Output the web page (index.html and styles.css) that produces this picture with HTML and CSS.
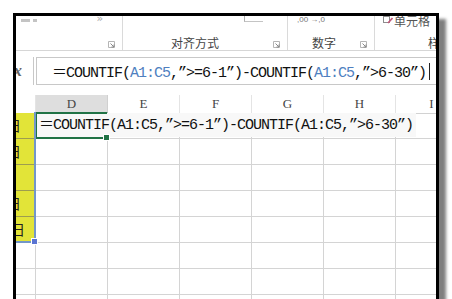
FILE: index.html
```html
<!DOCTYPE html>
<html lang="zh">
<head>
<meta charset="utf-8">
<title>COUNTIF</title>
<link rel="stylesheet" href="styles.css">
</head>
<body>
<div class="page">
  <div class="window">
    <div class="ribbon">
      <div class="group g1">
        <div class="tools">
          <span class="tick t1"></span><span class="tick t2"></span>
          <span class="glyph gl1">ˇ</span><span class="glyph gl2">»</span>
        </div>
        <div class="label-row"><span class="label"></span><svg class="launcher" viewBox="0 0 8 8"><path d="M0.5 0.5H6.5V6.5H0.5Z" fill="none" stroke="#b5b5b5"/><path d="M2.5 2.5L6 6M6 3.5V6H3.5" fill="none" stroke="#8a8a8a"/></svg></div>
      </div>
      <div class="group g2">
        <div class="tools"><span class="wrap-icon"></span></div>
        <div class="label-row"><span class="label">对齐方式</span><svg class="launcher" viewBox="0 0 8 8"><path d="M0.5 0.5H6.5V6.5H0.5Z" fill="none" stroke="#b5b5b5"/><path d="M2.5 2.5L6 6M6 3.5V6H3.5" fill="none" stroke="#8a8a8a"/></svg></div>
      </div>
      <div class="group g3">
        <div class="tools"><span class="numfmt">,00 →,0</span></div>
        <div class="label-row"><span class="label">数字</span><svg class="launcher" viewBox="0 0 8 8"><path d="M0.5 0.5H6.5V6.5H0.5Z" fill="none" stroke="#b5b5b5"/><path d="M2.5 2.5L6 6M6 3.5V6H3.5" fill="none" stroke="#8a8a8a"/></svg></div>
      </div>
      <div class="group g4">
        <div class="tools">
          <svg class="cell-icon" viewBox="0 0 10 10"><rect x="0.5" y="1.5" width="6" height="6" fill="none" stroke="#8d8d8d"/><path d="M5 8L9.5 3" stroke="#c0587a" stroke-width="1.6"/></svg>
          <span class="cellfmt">单元格</span>
        </div>
        <div class="label-row"><span class="label label-left">样式</span></div>
      </div>
    </div>

    <div class="formula-bar">
      <div class="fx">ƒx</div>
      <div class="formula-input">
        <span class="ftext">＝COUNTIF(<span class="ref">A1:C5</span>,”&gt;=6-1”)-COUNTIF(<span class="ref">A1:C5</span>,”&gt;6-30”)</span><span class="caret"></span>
      </div>
    </div>

    <div class="sheet">
      <div class="row head">
        <div class="hcell"></div>
        <div class="hcell active-col">D</div>
        <div class="hcell">E</div>
        <div class="hcell">F</div>
        <div class="hcell">G</div>
        <div class="hcell">H</div>
        <div class="hcell">I</div>
      </div>

      <div class="row">
        <div class="cell yellow sel-anchor"><span class="date">2017年6月1日</span><div class="range-sel"><span class="range-handle"></span></div></div>
        <div class="cell active">
          <span class="cell-text">＝COUNTIF(A1:C5,”&gt;=6-1”)-COUNTIF(A1:C5,”&gt;6-30”)</span>
          <div class="active-border"><span class="active-handle"></span></div>
        </div>
        <div class="cell"></div><div class="cell"></div><div class="cell"></div><div class="cell"></div><div class="cell"></div>
      </div>
      <div class="row">
        <div class="cell yellow"><span class="date">2017年6月2日</span></div>
        <div class="cell"></div><div class="cell"></div><div class="cell"></div><div class="cell"></div><div class="cell"></div><div class="cell"></div>
      </div>
      <div class="row">
        <div class="cell yellow"></div>
        <div class="cell"></div><div class="cell"></div><div class="cell"></div><div class="cell"></div><div class="cell"></div><div class="cell"></div>
      </div>
      <div class="row">
        <div class="cell yellow"><span class="date">2017年6月9日</span></div>
        <div class="cell"></div><div class="cell"></div><div class="cell"></div><div class="cell"></div><div class="cell"></div><div class="cell"></div>
      </div>
      <div class="row">
        <div class="cell yellow wide"><span class="date">2017年6月30日</span></div>
        <div class="cell"></div><div class="cell"></div><div class="cell"></div><div class="cell"></div><div class="cell"></div><div class="cell"></div>
      </div>
      <div class="row">
        <div class="cell"></div><div class="cell"></div><div class="cell"></div><div class="cell"></div><div class="cell"></div><div class="cell"></div><div class="cell"></div>
      </div>
      <div class="row">
        <div class="cell"></div><div class="cell"></div><div class="cell"></div><div class="cell"></div><div class="cell"></div><div class="cell"></div><div class="cell"></div>
      </div>
      <div class="row">
        <div class="cell"></div><div class="cell"></div><div class="cell"></div><div class="cell"></div><div class="cell"></div><div class="cell"></div><div class="cell"></div>
      </div>
    </div>
  </div>
</div>
</body>
</html>
```

FILE: styles.css
```css
html, body {
  margin: 0;
  padding: 0;
}
body {
  width: 452px;
  height: 299px;
  overflow: hidden;
  background: #fff;
  font-family: "Noto Sans CJK SC", "Liberation Sans", sans-serif;
  color: #444;
}
.page {
  padding: 13px 0 0 13px;
}
.window {
  width: 420px;
  height: 300px;
  border: 3px solid #000;
  border-bottom: none;
  box-shadow: 7px 6px 3px rgba(0, 0, 0, 0.5);
  background: #fff;
  overflow: hidden;
  display: flex;
  flex-direction: column;
}

/* ribbon */
.ribbon {
  flex: none;
  display: flex;
  height: 34px;
  border-bottom: 1px solid #d6d6d6;
}
.group {
  display: flex;
  flex-direction: column;
  flex-shrink: 0;
  box-sizing: border-box;
  border-right: 1px solid #dadada;
  min-width: 0;
}
.g1 { width: 107px; }
.g2 { width: 165px; }
.g3 { width: 87px; }
.g4 { flex: 1 1 0; border-right: none; overflow: hidden; }
.tools {
  height: 20px;
  overflow: hidden;
  display: flex;
  align-items: flex-end;
}
.label-row {
  height: 14px;
  display: flex;
  align-items: center;
}
.label {
  flex: 1;
  text-align: center;
  font-size: 12px;
  line-height: 14px;
  color: #444;
  white-space: nowrap;
}
.g2 .label { padding-right: 6px; }
.label-left {
  text-align: left;
  padding-left: 53px;
}
.launcher {
  width: 8px;
  height: 8px;
  flex: none;
  margin: 5px 6px 0 0;
  align-self: flex-start;
}

.tick {
  display: block;
  flex: none;
  width: 9px;
  height: 3px;
  background: #c4c4c4;
  margin-bottom: 14px;
}
.t1 { margin-left: 5px; }
.t2 { margin-left: 3px; width: 4px; }
.glyph {
  font-family: "DejaVu Sans", sans-serif;
  font-size: 11px;
  line-height: 12px;
  color: #aaa;
  margin-bottom: 11px;
}
.gl1 { margin-left: 44px; }
.gl2 { margin-left: 10px; }

.wrap-icon {
  display: block;
  flex: none;
  width: 18px;
  height: 6px;
  margin-left: 121px;
  margin-bottom: 14px;
  border-left: 1px solid #b0b0b0;
  border-bottom: 1px solid #c4c4c4;
}
.numfmt {
  font-family: "Liberation Sans", sans-serif;
  font-size: 8px;
  line-height: 9px;
  color: #777;
  margin-left: 9px;
  margin-bottom: 12px;
  white-space: nowrap;
}
.cell-icon {
  width: 10px;
  height: 10px;
  margin-left: 8px;
  margin-bottom: 11px;
  flex: none;
}
.cellfmt {
  font-size: 12px;
  line-height: 13px;
  color: #555;
  margin-left: 1px;
  margin-bottom: 9px;
  white-space: nowrap;
}

/* formula bar */
.formula-bar {
  flex: none;
  display: flex;
  height: 28px;
  margin-top: 6px;
}
.fx {
  width: 18px;
  flex: none;
  box-sizing: border-box;
  border-right: 1px solid #c8c8c8;
  overflow: hidden;
  white-space: nowrap;
  font-family: "Liberation Serif", serif;
  font-style: italic;
  font-weight: bold;
  font-size: 17px;
  line-height: 28px;
  color: #666;
  text-indent: -11px;
}
.formula-input {
  flex: 1;
  margin-left: 2px;
  border: 1px solid #c8c8c8;
  border-right: none;
  display: flex;
  align-items: center;
  padding-left: 15px;
  white-space: nowrap;
  overflow: hidden;
}
.ftext, .cell-text {
  font-family: "Liberation Mono", "Noto Sans CJK SC", monospace;
  font-size: 15px;
  letter-spacing: -1px;
  color: #111;
}
.ref { color: #4f7fbf; }
.caret {
  display: block;
  flex: none;
  width: 1px;
  height: 17px;
  background: #222;
  margin-left: 3px;
}

/* sheet */
.sheet {
  flex: none;
  margin-top: 10px;
  margin-left: -40px;
}
.row {
  display: grid;
  grid-template-columns: 60px repeat(6, 72px);
  height: 26px;
}
.row.head {
  height: 18px;
}
.hcell {
  box-sizing: border-box;
  border-right: 1px solid #e4e4e4;
  border-bottom: 1px solid #d2d2d2;
  font-family: "Liberation Serif", serif;
  font-size: 13px;
  line-height: 17px;
  text-align: center;
  color: #444;
}
.hcell.active-col {
  background: #dedede;
  border-bottom: 2px solid #217346;
  border-right-color: #d0d0d0;
}
.cell {
  box-sizing: border-box;
  border-right: 1px solid #d4d4d4;
  border-bottom: 1px solid #d4d4d4;
  position: relative;
}
.cell.yellow {
  background: #e2e438;
  border-bottom-color: #9d9d50;
  display: flex;
  justify-content: flex-end;
  padding-right: 14px;
}
.cell.yellow.wide { padding-right: 10px; }
.date {
  flex: none;
  font-size: 14px;
  line-height: 25px;
  color: #222;
  white-space: nowrap;
}

.range-sel {
  position: absolute;
  left: 0;
  top: -1px;
  width: 60px;
  height: 131px;
  box-sizing: border-box;
  border-right: 2px solid #7397c9;
  border-bottom: 2px solid #7397c9;
  z-index: 3;
}
.range-handle {
  position: absolute;
  right: -4px;
  bottom: -4px;
  width: 5px;
  height: 5px;
  background: #5a74d2;
  border: 1px solid #fff;
}

.cell-text {
  position: absolute;
  left: 0;
  top: 0;
  bottom: 1px;
  width: 380px;
  padding-left: 3px;
  box-sizing: border-box;
  line-height: 25px;
  white-space: nowrap;
  background: #f8f8f8;
  z-index: 1;
}
.active-border {
  position: absolute;
  left: -1px;
  top: -1px;
  width: 72px;
  height: 27px;
  box-sizing: border-box;
  border: 2px solid #217346;
  border-right: none;
  z-index: 2;
}
.active-handle {
  position: absolute;
  right: -3px;
  bottom: -4px;
  width: 5px;
  height: 5px;
  background: #217346;
  border: 1px solid #fff;
}
```
